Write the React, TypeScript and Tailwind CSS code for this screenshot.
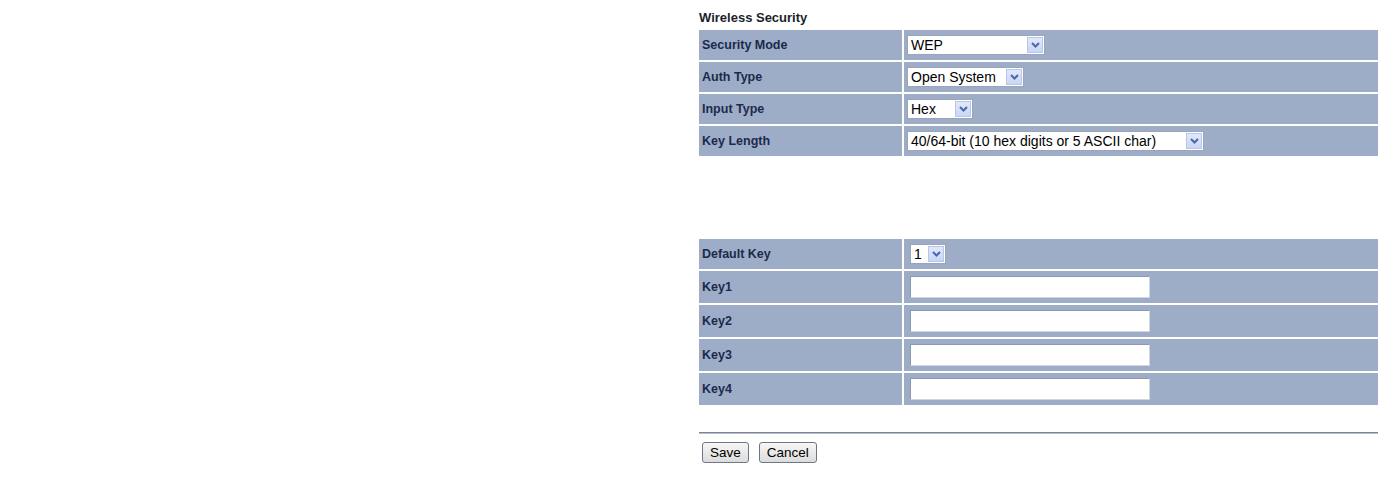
const rowCell = "bg-[#9eadc7]";

const Chevron = () => (
  <svg width="9" height="6" viewBox="0 0 9 6" className="block">
    <path d="M1 1 L4.5 4.5 L8 1" fill="none" stroke="#4a67ad" strokeWidth="2" />
  </svg>
);

const FakeSelect = ({ value, width }: { value: string; width: string }) => (
  <div
    className={`flex h-[20px] items-stretch border border-[#9aa6b8] bg-white ${width}`}
  >
    <span className="flex-1 overflow-hidden whitespace-nowrap pl-[3px] text-[14px] leading-[18px] text-black">
      {value}
    </span>
    <span className="m-[1px] flex w-[16px] items-center justify-center border border-[#b7c6ea] bg-gradient-to-b from-[#e1e8fa] to-[#c9d6f3]">
      <Chevron />
    </span>
  </div>
);

const FormRow = ({
  label,
  children,
  tall,
}: {
  label: string;
  children?: React.ReactNode;
  tall?: boolean;
}) => (
  <div className={`grid grid-cols-[203px_1fr] gap-[2px] ${tall ? "h-[32px]" : "h-[30px]"}`}>
    <div className={`${rowCell} flex items-center pl-[3px] text-[12.5px] font-bold text-[#1b2a4c]`}>
      {label}
    </div>
    <div className={`${rowCell} flex items-center`}>{children}</div>
  </div>
);

const KeyInput = () => (
  <div className="ml-[6px] h-[22px] w-[240px] border border-[#8c98ac] border-r-[#d0d6e0] border-b-[#d0d6e0] bg-white" />
);

const Button = ({ label }: { label: string }) => (
  <button className="h-[21px] rounded-[3px] border border-[#6f7782] bg-gradient-to-b from-[#f7f7f7] to-[#dcdcdc] px-[7px] text-[13.5px] leading-[17px] text-black">
    {label}
  </button>
);

export default function App() {
  return (
    <div className="min-h-screen bg-white font-['Liberation_Sans',Arial,sans-serif]">
      <div className="ml-[699px] mr-[4px] flex flex-col pt-[8px]">
        <div className="mb-[2px] flex h-[20px] items-center text-[13px] font-bold text-[#1c1f2a]">
          Wireless Security
        </div>

        <div className="flex flex-col gap-[2px]">
          <FormRow label="Security Mode">
            <div className="ml-[3px]">
              <FakeSelect value="WEP" width="w-[138px]" />
            </div>
          </FormRow>
          <FormRow label="Auth Type">
            <div className="ml-[3px]">
              <FakeSelect value="Open System" width="w-[117px]" />
            </div>
          </FormRow>
          <FormRow label="Input Type">
            <div className="ml-[3px]">
              <FakeSelect value="Hex" width="w-[66px]" />
            </div>
          </FormRow>
          <FormRow label="Key Length">
            <div className="ml-[3px]">
              <FakeSelect value="40/64-bit (10 hex digits or 5 ASCII char)" width="w-[297px]" />
            </div>
          </FormRow>
        </div>

        <div className="mt-[83px] flex flex-col gap-[2px]">
          <FormRow label="Default Key">
            <div className="ml-[6px]">
              <FakeSelect value="1" width="w-[36px]" />
            </div>
          </FormRow>
          <FormRow label="Key1" tall>
            <KeyInput />
          </FormRow>
          <FormRow label="Key2" tall>
            <KeyInput />
          </FormRow>
          <FormRow label="Key3" tall>
            <KeyInput />
          </FormRow>
          <FormRow label="Key4" tall>
            <KeyInput />
          </FormRow>
        </div>

        <div className="mt-[27px] h-[2px] border-t border-[#7c8595] bg-[#b8bec8]" />

        <div className="mt-[8px] flex gap-[10px] pl-[3px]">
          <Button label="Save" />
          <Button label="Cancel" />
        </div>
      </div>
    </div>
  );
}
